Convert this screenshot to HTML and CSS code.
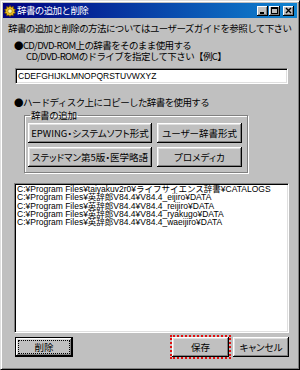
FILE: index.html
```html
<!DOCTYPE html>
<html lang="ja">
<head>
<meta charset="utf-8">
<link rel="stylesheet" href="styles.css">
</head>
<body>
<div class="win">
  <div class="titlebar">
    <span class="ticon">
      <svg width="12" height="12" viewBox="0 0 12 12">
        <g fill="#f0c020" stroke="#6a4a00" stroke-width="0.8">
          <path d="M6 0.5 L7.2 2.3 L9.4 1.6 L9.4 3.8 L11.5 4.6 L10.2 6.3 L11.5 8 L9.4 8.6 L9.2 10.8 L7.2 10.1 L6 11.6 L4.8 10.1 L2.8 10.8 L2.6 8.6 L0.5 8 L1.8 6.3 L0.5 4.6 L2.6 3.8 L2.6 1.6 L4.8 2.3 Z"/>
        </g>
        <circle cx="6" cy="6.1" r="2.2" fill="#fff6b0" stroke="#8a6a00" stroke-width="0.6"/>
      </svg>
    </span>
    <span class="ttext">辞書の追加と削除</span>
    <span class="tbtns">
      <span class="tb"><svg width="11" height="10" viewBox="0 0 11 10"><rect x="3" y="6" width="4" height="2" fill="#000"/></svg></span>
      <span class="tb"><svg width="11" height="10" viewBox="0 0 11 10"><rect x="2.5" y="1.5" width="6" height="6" fill="none" stroke="#000"/><rect x="2" y="1" width="7" height="2" fill="#000"/></svg></span>
      <span class="tb tclose"><svg width="11" height="10" viewBox="0 0 11 10"><path d="M3 2 L8 7 M8 2 L3 7" stroke="#000" stroke-width="1.4"/></svg></span>
    </span>
  </div>
  <div class="content">
    <p class="intro">辞書の追加と削除の方法についてはユーザーズガイドを参照して下さい</p>
    <p class="bullet">●CD/DVD-ROM上の辞書をそのまま使用する</p>
    <p class="sub">CD/DVD-ROMのドライブを指定して下さい【例C】</p>
    <div class="textbox">CDEFGHIJKLMNOPQRSTUVWXYZ</div>
    <p class="bullet b2">●ハードディスク上にコピーした辞書を使用する</p>
    <fieldset class="group">
      <legend class="glabel">辞書の追加</legend>
      <div class="ggrid">
        <span class="btn">EPWING・システムソフト形式</span>
        <span class="btn">ユーザー辞書形式</span>
        <span class="btn">ステッドマン第5版・医学略語</span>
        <span class="btn">プロメディカ</span>
      </div>
    </fieldset>
    <div class="listbox">
      <div class="li">C:¥Program Files¥taiyakuv2r0¥ライフサイエンス辞書¥CATALOGS</div>
      <div class="li">C:¥Program Files¥英辞郎V84.4¥V84.4_eijiro¥DATA</div>
      <div class="li">C:¥Program Files¥英辞郎V84.4¥V84.4_reijiro¥DATA</div>
      <div class="li">C:¥Program Files¥英辞郎V84.4¥V84.4_ryakugo¥DATA</div>
      <div class="li">C:¥Program Files¥英辞郎V84.4¥V84.4_waeijiro¥DATA</div>
    </div>
    <div class="footer">
      <span class="btn fbtn fdel"><span class="flabel">削除</span></span>
      <span class="fspace"></span>
      <span class="btn fbtn fsave">保存</span>
      <span class="btn fbtn fcancel">キャンセル</span>
    </div>
  </div>
</div>
</body>
</html>
```

FILE: styles.css
```css
html, body {
  margin: 0;
  padding: 0;
  background: #c0c0c0;
}
body {
  width: 300px;
  height: 370px;
  overflow: hidden;
  font-family: "Noto Sans CJK JP", sans-serif;
  color: #000;
}
.win {
  width: 300px;
  height: 370px;
  box-sizing: border-box;
  background: #c0c0c0;
  border: 1px solid;
  border-color: #dfdfdf #000 #000 #dfdfdf;
  box-shadow: inset 1px 1px #fff, inset -1px -1px #808080;
  padding: 2px;
  display: flex;
  flex-direction: column;
}
.titlebar {
  height: 15px;
  flex: none;
  background: linear-gradient(90deg, #000080 0%, #1084d0 100%);
  display: flex;
  align-items: center;
  padding-left: 1px;
}
.ticon {
  width: 12px;
  height: 12px;
  display: flex;
}
.ttext {
  margin-left: 1px;
  color: #fff;
  font-size: 9.5px;
  letter-spacing: -0.6px;
  line-height: 15px;
  white-space: nowrap;
}
.tbtns {
  margin-left: auto;
  margin-right: 3px;
  display: flex;
  align-items: center;
}
.tb {
  width: 11px;
  height: 10px;
  background: #c0c0c0;
  box-shadow: inset -1px -1px #000, inset 1px 1px #fff, inset -2px -2px #808080;
  display: flex;
}
.tb + .tb {
  margin-left: 1px;
}
.tb.tclose {
  margin-left: 3px;
}
.content {
  display: flex;
  flex-direction: column;
  align-items: flex-start;
}
.intro, .bullet, .sub {
  margin: 0;
  font-size: 9.5px;
  letter-spacing: -0.6px;
  white-space: nowrap;
}
.intro {
  margin-top: 4px;
  margin-left: 5px;
  line-height: 12px;
}
.bullet {
  margin-top: 6px;
  margin-left: 11px;
  line-height: 11px;
}
.sub {
  margin-left: 23px;
  line-height: 11px;
}
.bullet.b2 {
  margin-top: 12px;
  line-height: 12px;
}
.textbox {
  margin-top: 6px;
  margin-left: 12px;
  width: 273px;
  height: 16px;
  box-sizing: border-box;
  background: #fff;
  border: 1px solid;
  border-color: #808080 #fff #fff #808080;
  box-shadow: inset 1px 1px #000, inset -1px -1px #dfdfdf;
  font-family: "Liberation Sans", sans-serif;
  font-size: 8.5px;
  line-height: 14px;
  padding-left: 2px;
}
.group {
  margin: 1px 0 0 21px;
  width: 224px;
  box-sizing: border-box;
  min-width: 0;
  border: 1px solid #808080;
  box-shadow: 1px 1px 0 #fff, inset 1px 1px 0 #fff;
  padding: 2px 3px 5px 3px;
}
.glabel {
  padding: 0 1px;
  margin-left: 2px;
  font-size: 9.5px;
  letter-spacing: -0.4px;
  line-height: 12px;
}
.ggrid {
  display: grid;
  grid-template-columns: 124px 85px;
  grid-auto-rows: 20px;
  column-gap: 5px;
  row-gap: 4px;
}
.btn {
  display: flex;
  align-items: center;
  justify-content: center;
  box-sizing: border-box;
  background: #c0c0c0;
  box-shadow: inset -1px -1px #000, inset 1px 1px #fff, inset -2px -2px #808080, inset 2px 2px #dfdfdf;
  font-size: 9.5px;
  font-feature-settings: "palt";
  letter-spacing: 0;
  white-space: nowrap;
  position: relative;
}
.listbox {
  margin-top: 10px;
  margin-left: 11px;
  width: 275px;
  height: 150px;
  box-sizing: border-box;
  background: #fff;
  border: 1px solid;
  border-color: #808080 #fff #fff #808080;
  box-shadow: inset 1px 1px #000, inset -1px -1px #dfdfdf;
  padding: 1px 0 0 2px;
  font-family: "Liberation Sans", "Noto Sans CJK JP", sans-serif;
  font-size: 8.5px;
  line-height: 8.25px;
}
.li {
  white-space: nowrap;
}
.footer {
  margin-top: 4px;
  align-self: stretch;
  display: flex;
  height: 20px;
  padding-right: 8px;
}
.fbtn {
  height: 20px;
}
.fdel {
  margin-left: 12px;
  width: 58px;
  border: 1px solid #000;
  padding: 2px;
}
.flabel {
  flex: 1;
  align-self: stretch;
  display: flex;
  align-items: center;
  justify-content: center;
  border: 1px dotted #000;
}
.fspace {
  flex: 1;
}
.fsave {
  width: 57px;
  outline: 2px dotted #e01010;
  outline-offset: 0;
}
.fcancel {
  margin-left: 4px;
  width: 56px;
}
```
